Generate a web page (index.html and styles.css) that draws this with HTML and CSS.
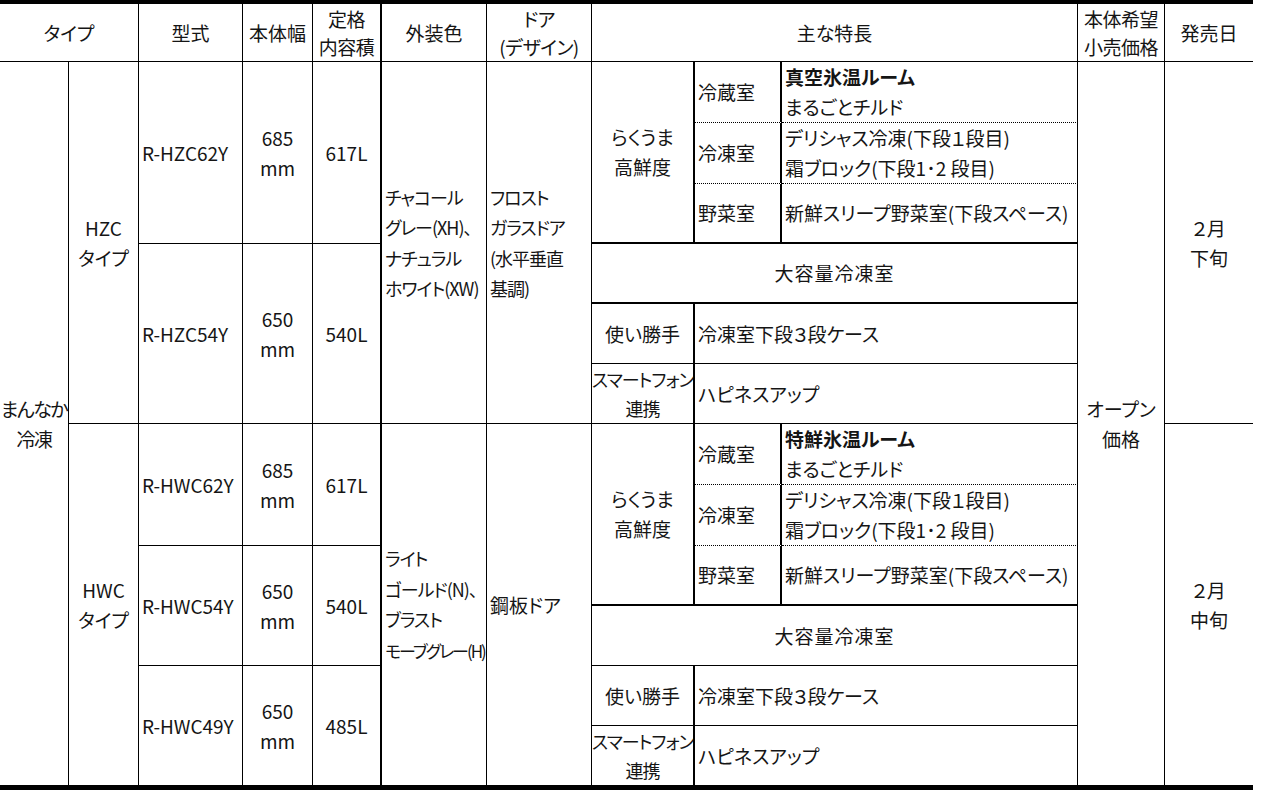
FILE: index.html
```html
<!DOCTYPE html>
<html lang="ja">
<head>
<meta charset="utf-8">
<title>冷蔵庫 仕様一覧</title>
<link rel="stylesheet" href="styles.css">
</head>
<body>
<table class="spec">
  <colgroup>
    <col class="c1"><col class="c2"><col class="c3"><col class="c4"><col class="c5"><col class="c6">
    <col class="c7"><col class="c8"><col class="c9"><col class="c10"><col class="c11"><col class="c12">
  </colgroup>
  <thead>
    <tr class="hd">
      <th colspan="2">タイプ</th>
      <th>型式</th>
      <th>本体幅</th>
      <th class="r2 tight">定格<br>内容積</th>
      <th>外装色</th>
      <th class="tight">ドア<br>(デザイン)</th>
      <th colspan="3">主な特長</th>
      <th class="tight">本体希望<br>小売価格</th>
      <th class="nr">発売日</th>
    </tr>
  </thead>
  <tbody>
    <tr class="r61">
      <td rowspan="12" class="ctr nb narrow">まんなか<br>冷凍</td>
      <td rowspan="6" class="ctr">HZC<br>タイプ</td>
      <td rowspan="3" class="lft">R-HZC62Y</td>
      <td rowspan="3" class="ctr">685<br>mm</td>
      <td rowspan="3" class="ctr r2">617L</td>
      <td rowspan="6" class="lft tightl">チャコール<br>グレー(XH)、<br>ナチュラル<br>ホワイト(XW)</td>
      <td rowspan="6" class="lft tightl">フロスト<br>ガラスドア<br>(水平垂直<br>基調)</td>
      <td rowspan="3" class="ctr r2 b2">らくうま<br>高鮮度</td>
      <td class="lft r2 dot">冷蔵室</td>
      <td class="lft dot pl"><b>真空氷温ルーム</b><br>まるごとチルド</td>
      <td rowspan="12" class="ctr nb">オープン<br>価格</td>
      <td rowspan="6" class="ctr nr">２月<br>下旬</td>
    </tr>
    <tr>
      <td class="lft r2 dot">冷凍室</td>
      <td class="lft dot pl">デリシャス冷凍(下段１段目)<br>霜ブロック(下段1･2 段目)</td>
    </tr>
    <tr>
      <td class="lft r2 b2">野菜室</td>
      <td class="lft b2 pl">新鮮スリープ野菜室(下段スペース)</td>
    </tr>
    <tr>
      <td rowspan="3" class="lft">R-HZC54Y</td>
      <td rowspan="3" class="ctr">650<br>mm</td>
      <td rowspan="3" class="ctr r2">540L</td>
      <td colspan="3" class="ctr b2 wide">大容量冷凍室</td>
    </tr>
    <tr>
      <td class="ctr r2">使い勝手</td>
      <td colspan="2" class="lft">冷凍室下段３段ケース</td>
    </tr>
    <tr>
      <td class="ctr r2 tight small">スマートフォン<br>連携</td>
      <td colspan="2" class="lft">ハピネスアップ</td>
    </tr>
    <tr class="r61">
      <td rowspan="6" class="ctr nb">HWC<br>タイプ</td>
      <td rowspan="2" class="lft">R-HWC62Y</td>
      <td rowspan="2" class="ctr">685<br>mm</td>
      <td rowspan="2" class="ctr r2">617L</td>
      <td rowspan="6" class="lft tightl nb">ライト<br>ゴールド(N)、<br>ブラスト<br><span class="sq">モーブグレー(H)</span></td>
      <td rowspan="6" class="lft nb">鋼板ドア</td>
      <td rowspan="3" class="ctr r2 b2">らくうま<br>高鮮度</td>
      <td class="lft r2 dot">冷蔵室</td>
      <td class="lft dot pl"><b>特鮮氷温ルーム</b><br>まるごとチルド</td>
      <td rowspan="6" class="ctr nr nb">２月<br>中旬</td>
    </tr>
    <tr>
      <td class="lft r2 dot">冷凍室</td>
      <td class="lft dot pl">デリシャス冷凍(下段１段目)<br>霜ブロック(下段1･2 段目)</td>
    </tr>
    <tr>
      <td rowspan="2" class="lft">R-HWC54Y</td>
      <td rowspan="2" class="ctr">650<br>mm</td>
      <td rowspan="2" class="ctr r2">540L</td>
      <td class="lft r2 b2">野菜室</td>
      <td class="lft b2 pl">新鮮スリープ野菜室(下段スペース)</td>
    </tr>
    <tr>
      <td colspan="3" class="ctr wide">大容量冷凍室</td>
    </tr>
    <tr>
      <td rowspan="2" class="lft nb">R-HWC49Y</td>
      <td rowspan="2" class="ctr nb">650<br>mm</td>
      <td rowspan="2" class="ctr r2 nb">485L</td>
      <td class="ctr r2">使い勝手</td>
      <td colspan="2" class="lft">冷凍室下段３段ケース</td>
    </tr>
    <tr class="r59">
      <td class="ctr r2 tight small nb">スマートフォン<br>連携</td>
      <td colspan="2" class="lft nb">ハピネスアップ</td>
    </tr>
  </tbody>
</table>
</body>
</html>
```

FILE: styles.css
```css
html, body {
  margin: 0;
  padding: 0;
  background: #ffffff;
}

body {
  font-family: "Noto Sans CJK JP", "Noto Sans", sans-serif;
  font-size: 19px;
  color: #151515;
  font-feature-settings: "palt";
}

.spec {
  border-collapse: separate;
  border-spacing: 0;
  table-layout: fixed;
  width: 1253px;
  border-top: 4px solid #000;
  border-bottom: 5px solid #000;
}

.c1 { width: 69px; }
.c2 { width: 70px; }
.c3 { width: 104px; }
.c4 { width: 70px; }
.c5 { width: 69px; }
.c6 { width: 105px; }
.c7 { width: 105px; }
.c8 { width: 103px; }
.c9 { width: 87px; }
.c10 { width: 296px; }
.c11 { width: 87px; }
.c12 { width: 88px; }

.spec th,
.spec td {
  padding: 0 3px;
  vertical-align: middle;
  line-height: 30px;
  font-weight: normal;
  border-right: 1px solid #000;
  border-bottom: 1px solid #000;
  white-space: nowrap;
  overflow: hidden;
}

.spec th {
  text-align: center;
}

.hd {
  height: 58px;
}

.spec th.tight {
  line-height: 28px;
}

.spec tbody tr {
  height: 60px;
}

.spec tbody tr.r61 {
  height: 61px;
}

.spec tbody tr.r59 {
  height: 59px;
}

.spec .tight {
  letter-spacing: -0.5px;
}

.spec .tightl {
  line-height: 30.5px;
  font-size: 18px;
  letter-spacing: -1px;
  padding-right: 0;
}

.spec .sq {
  font-size: 17px;
  letter-spacing: -2px;
}

.spec .narrow {
  padding: 0;
  letter-spacing: -1.5px;
}

.spec .small {
  font-size: 18px;
  line-height: 29px;
  letter-spacing: -1px;
  padding: 0;
}

.ctr {
  text-align: center;
}

.lft {
  text-align: left;
}

.pl {
  padding-left: 2px;
}

.wide {
  letter-spacing: 1px;
}

.spec .r2 {
  border-right: 2px solid #000;
}

.spec .nr {
  border-right: none;
}

.spec .nb {
  border-bottom: none;
}

.spec .b2 {
  border-bottom: 2px solid #000;
}

.spec .dot {
  border-bottom: 1px dotted #000;
}

b {
  font-weight: bold;
}
```
